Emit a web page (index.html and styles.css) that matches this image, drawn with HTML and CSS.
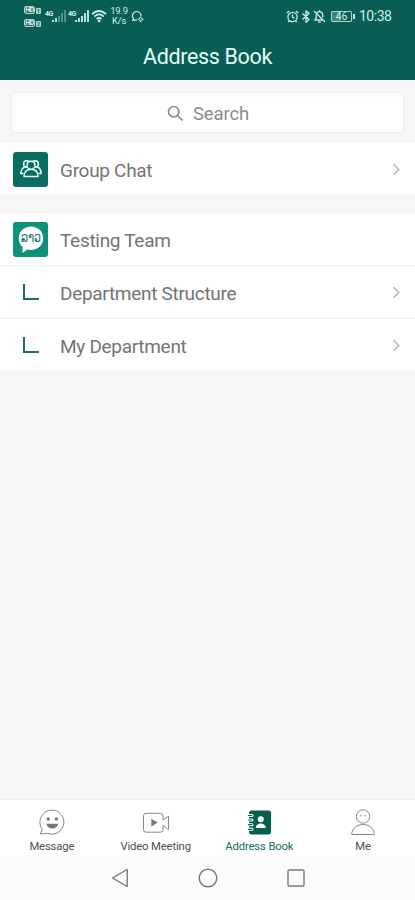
FILE: index.html
```html
<!DOCTYPE html>
<html lang="en">
<head>
<meta charset="utf-8">
<title>Address Book</title>
<link rel="stylesheet" href="styles.css">
</head>
<body>
<div class="app">
  <header class="header">
    <div class="status">
      <div class="hd"><span><b>HD</b><i>1</i></span><span><b>HD</b><i>2</i></span></div>
      <svg class="signal first" width="21" height="15" viewBox="0 0 21 15"><text x="0" y="6.5">4G</text><path d="M8 13v-2" /><path d="M11 13v-4"/><g opacity=".4"><path d="M14 13V7M17 13V4M20 13V1"/></g></svg>
      <svg class="signal second" width="21" height="15" viewBox="0 0 21 15"><text x="0" y="6.5">4G</text><path d="M8 13v-2M11 13v-4M14 13V7M17 13V4M20 13V1"/></svg>
      <svg class="wifi" width="16" height="14" viewBox="0 0 16 14"><path d="M1 5Q8-1 15 5M3.3 7.5Q8 3.3 12.7 7.5M5.6 10Q8 8 10.4 10"/><circle cx="8" cy="12" r="1.3"/></svg>
      <div class="speed"><span>19.9</span><span>K/s</span></div>
      <svg class="bubble" width="14" height="13" viewBox="0 0 14 13"><path d="M7 9.800 2.600 10.400l.9-1.700A4.300 4.300 0 1 1 11 6"/><path class="star" d="m10.600 6.600.8 1.900 1.900.8-1.900.8-.8 1.900-.8-1.900-1.900-.8 1.900-.8z"/></svg>
      <div class="right">
        <svg width="13" height="13" viewBox="0 0 13 13"><circle cx="6.5" cy="7" r="4.6"/><path d="M6.5 4.3V7l2 1.200M.8 3 3.200.9M12.200 3 9.800.9M3.200 10.800l-1 1.300M9.800 10.800l1 1.300"/></svg>
        <svg width="10" height="13" viewBox="0 0 10 13"><path d="m1.500 3.500 6.500 6L5 12.200V.8L8 3.500l-6.500 6"/></svg>
        <svg class="bell" width="13" height="13" viewBox="0 0 13 13"><path d="m1 1 11 11M3.200 4.500v3.300L1.800 10h8M4 2.800a3.200 3.200 0 0 1 5.700 2v2.700M6.500 1V.3M5.300 12h2.400"/></svg>
        <span class="battery">46</span><i class="cap"></i>
        <span class="clock">10:38</span>
      </div>
    </div>
    <h1>Address Book</h1>
  </header>
  <main>
    <div class="search">
      <svg width="17" height="17" viewBox="0 0 17 17"><circle cx="6.700" cy="6.700" r="5.200"/><path d="m10.500 10.500 5 5"/></svg>
      <span>Search</span>
    </div>
    <section class="list">
      <div class="row">
        <span class="lead tile dark"><svg width="24" height="20" viewBox="0 0 24 20"><circle cx="7.800" cy="5" r="3.200"/><circle cx="16.200" cy="5" r="3.200"/><path d="M5.800 8C3.200 9 2 11.500 1.800 14.500h2.500M18.200 8c2.600 1 3.800 3.500 4 6.500h-2.500"/><path class="front" d="M5 17.500c0-4.800 2.800-7.300 7-7.300s7 2.500 7 7.300z"/><circle class="front" cx="12" cy="6.200" r="4"/></svg></span>
        <span class="label">Group Chat</span>
        <svg class="chevron" width="9" height="13" viewBox="0 0 9 13"><path d="m1.500 1.300 5.300 5.200-5.300 5.200"/></svg>
      </div>
    </section>
    <section class="list">
      <div class="row">
        <span class="lead tile light"><svg width="35" height="35" viewBox="0 0 35 35"><path d="M18 4.500c7 0 12.200 5 12.200 11.800S25 28 18 28c-1.500 0-2.600-.2-3.800-.5L9.500 31l.2-5.700A11.600 11.600 0 0 1 5.800 16.300C5.800 9.500 11 4.500 18 4.500"/><text transform="translate(18 20) scale(1 1.250)" text-anchor="middle">ລາວ</text></svg></span>
        <span class="label">Testing Team</span>
      </div>
      <div class="row">
        <span class="lead"><i class="branch"></i></span>
        <span class="label">Department Structure</span>
        <svg class="chevron" width="9" height="13" viewBox="0 0 9 13"><path d="m1.500 1.300 5.300 5.200-5.300 5.200"/></svg>
      </div>
      <div class="row">
        <span class="lead"><i class="branch"></i></span>
        <span class="label">My Department</span>
        <svg class="chevron" width="9" height="13" viewBox="0 0 9 13"><path d="m1.500 1.300 5.300 5.200-5.300 5.200"/></svg>
      </div>
    </section>
  </main>
  <nav class="tabs">
    <div class="tab">
      <svg width="28" height="28" viewBox="0 0 28 28"><path d="M4.200 21.200A12 12 0 1 1 9.500 25.300L2.300 26z"/><g class="fill"><circle cx="10.200" cy="11" r="1.700"/><circle cx="18.300" cy="11" r="1.700"/><path d="M8.500 15.800h11.600c-.7 6.300-10.900 6.300-11.600 0z"/></g></svg>
      <span>Message</span>
    </div>
    <div class="tab">
      <svg width="28" height="28" viewBox="0 0 28 28"><path d="M4 5.300h14.500a2.500 2.500 0 0 1 2.500 2.500v4.400l5.500-4v13.300L21 17.500v4.200a2.500 2.500 0 0 1-2.500 2.500H4a2.500 2.500 0 0 1-2.500-2.500V7.800A2.500 2.500 0 0 1 4 5.300z"/><path class="fill" d="m9.300 10.800 6.500 3.700-6.500 4z"/></svg>
      <span>Video Meeting</span>
    </div>
    <div class="tab active">
      <svg width="28" height="28" viewBox="0 0 28 28"><rect class="solid" x="4" y="2.500" width="22" height="24" rx="2.500"/><g class="rings"><path d="M3 7.500h4M3 12h4M3 16.700h4M3 21.300h4"/></g><g class="rings-in"><path d="M3.500 7.500h3.300M3.500 12h3.300M3.500 16.700h3.300M3.500 21.300h3.300"/></g><circle class="white" cx="15.800" cy="11.300" r="3"/><path class="white" d="M10.800 20c0-6 10-6 10 0z"/></svg>
      <span>Address Book</span>
    </div>
    <div class="tab">
      <svg width="28" height="28" viewBox="0 0 28 28"><circle cx="14" cy="8.500" r="6.700"/><path d="M2.700 26.500c.2-13.300 22.400-13.300 22.600 0zM12 6.700v1.800M16 6.700v1.800"/></svg>
      <span>Me</span>
    </div>
  </nav>
  <footer class="system">
    <svg width="18" height="20" viewBox="0 0 18 20"><path d="M16.200 1.500v17L1.500 10z"/></svg>
    <svg width="20" height="20" viewBox="0 0 20 20"><circle cx="10" cy="10" r="8.800"/></svg>
    <svg width="18" height="18" viewBox="0 0 18 18"><rect x="1" y="1" width="16" height="16" rx="1"/></svg>
  </footer>
</div>
</body>
</html>
```
FILE: styles.css
```css
* { box-sizing: border-box; }
body { margin: 0; font-family: Roboto, "Liberation Sans", sans-serif; }
svg { display: block; flex: none; fill: none; stroke: currentColor; stroke-linejoin: round; }
i { font-style: normal; }
.app { width: 415px; height: 900px; display: flex; flex-direction: column; background: #f7f7f7; }
.header { height: 80px; background: #095e53; color: #e4fffa; }
.status { height: 32px; display: flex; align-items: center; padding: 0 24px; color: #c9f0e8; }
.hd { display: flex; flex-direction: column; gap: 4px; width: 21px; }
.hd span { display: flex; align-items: center; gap: 1px; height: 9px; }
.hd b { width: 11px; height: 8px; border: 1px solid #a8d8cc; background: #2f7267; color: #d5f5ee; border-radius: 2px; font-size: 7px; line-height: 6px; text-align: center; letter-spacing: -.4px; }
.hd i { width: 5px; height: 6px; margin-top: 2px; background: #a8d8cc; color: #095e53; border-radius: 1px; font-size: 5px; line-height: 6px; text-align: center; font-weight: 700; }
.signal { stroke-width: 1.8; stroke-linejoin: miter; }
.signal text { font-size: 7px; font-weight: 700; fill: currentColor; stroke: none; letter-spacing: -.6px; }
.second { margin-left: 2px; }
.wifi { margin-left: 2px; stroke-width: 1.7; }
.wifi circle { fill: currentColor; stroke: none; }
.speed { width: 20px; margin-left: 2px; display: flex; flex-direction: column; font-size: 9.500px; line-height: 10px; text-align: center; letter-spacing: -.2px; }
.bubble { margin-left: 1px; stroke-width: 1.200; }
.star { fill: #095e53; stroke-width: 1; }
.right { margin-left: auto; display: flex; align-items: center; }
.right svg { stroke-width: 1.300; }
.right svg + svg { margin-left: 2px; }
.right .bell { margin-right: 5px; }
.battery { width: 21px; height: 11px; border: 1px solid #a8d8cc; border-radius: 1px; background: linear-gradient(90deg, #438479 48%, transparent 48%); font-size: 10.500px; line-height: 10px; text-align: center; }
.cap { width: 2px; height: 5px; background: #c9f0e8; margin-left: 1px; }
.clock { margin-left: 4px; font-size: 14px; line-height: 16px; width: 32px; white-space: nowrap; letter-spacing: -.5px; }
h1 { margin: 0; height: 48px; line-height: 50px; font-size: 21.500px; font-weight: 400; text-align: center; letter-spacing: -.35px; }
main { flex: 1; }
.search { margin: 12px 11px 10px; height: 41px; border: 1px solid #eee; border-radius: 5px; background: #fff; display: flex; align-items: center; justify-content: center; gap: 9px; color: #8c8c8c; font-size: 18.500px; padding: 1px 0 0 1px; }
.search span { padding-top: 1px; letter-spacing: -.1px; }
.search svg { stroke-width: 1.700; }
.list { background: #fff; margin-bottom: 18px; }
.row { height: 52px; display: flex; align-items: center; padding: 0 14px 0 13px; }
.row + .row { height: 53px; border-top: 1px solid #eee; }
.lead { width: 35px; height: 35px; display: flex; align-items: center; justify-content: center; margin-right: 12px; }
.tile { border-radius: 3px; }
.dark { background: #096e61; color: #e6fffa; }
.dark svg { stroke-width: 1.500; }
.front { fill: #096e61; }
.light { background: #0b9279; }
.light path { fill: #fff; stroke: none; }
.light text { font: 400 11px "DejaVu Sans", sans-serif; fill: #0b6f60; stroke: none; }
.branch { width: 16px; height: 16px; border: solid #1b6f66; border-width: 0 0 2px 2px; }
.label { flex: 1; color: #747474; font-size: 19px; letter-spacing: -.3px; padding-top: 2px; }
.chevron { color: #b5b5b5; stroke-width: 1.500; stroke-linejoin: miter; }
.tabs { height: 56px; background: #fff; display: flex; box-shadow: 0 -1px #eee; }
.tab { flex: 1; display: flex; flex-direction: column; align-items: center; padding-top: 8px; color: #7b7b7b; }
.tab svg { stroke-width: .9; }
.tab span { color: #505050; font-size: 11.300px; line-height: 14px; margin-top: 4px; white-space: nowrap; letter-spacing: -.15px; }
.tab.active span { color: #19685e; }
.fill { fill: #777; stroke: none; }
.solid { fill: #095e53; stroke: none; }
.white { fill: #fff; stroke: none; }
.rings { stroke: #fff; stroke-width: 3; stroke-linecap: round; }
.rings-in { stroke: #095e53; stroke-width: 1.200; stroke-linecap: round; }
.system { height: 44px; background: #fcfcfc; display: flex; align-items: center; justify-content: center; gap: 69px; color: #777; }
.system svg { stroke-width: 1.400; }
```
